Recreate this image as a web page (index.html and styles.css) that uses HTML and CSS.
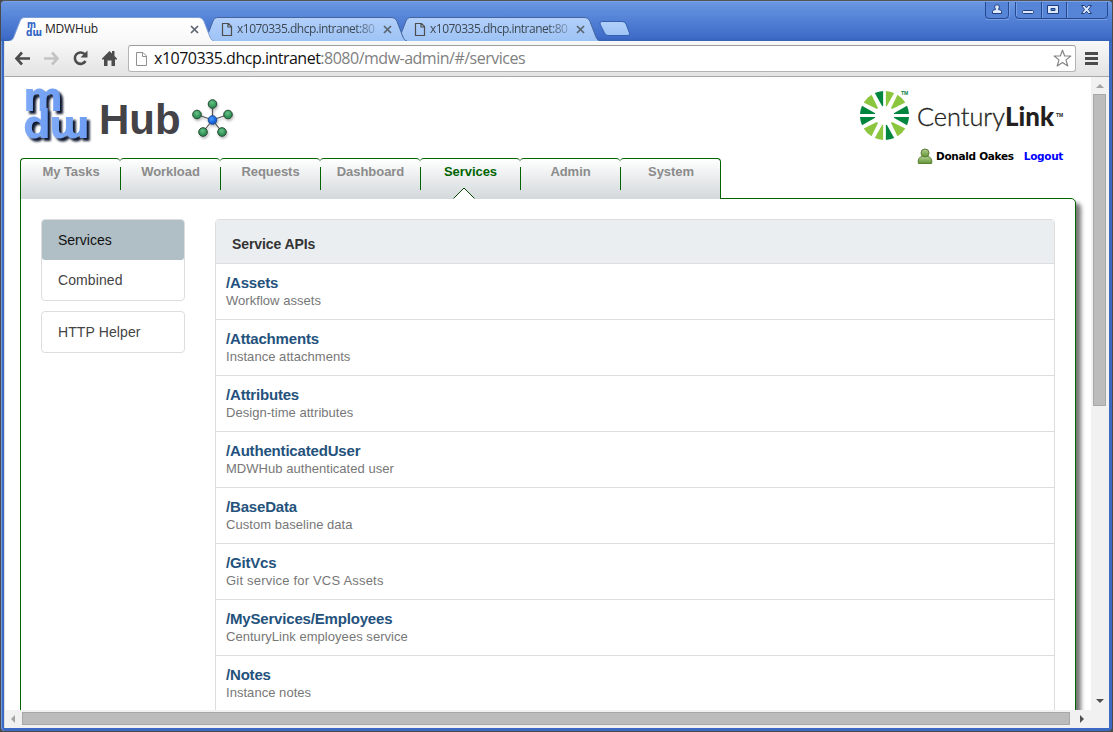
FILE: index.html
```html
<!DOCTYPE html>
<html lang="en">
<head>
<meta charset="utf-8">
<title>MDWHub</title>
<link rel="stylesheet" href="styles.css">
</head>
<body>
<svg width="0" height="0" class="defs">
  <defs>
    <linearGradient id="tabOn" x1="0" y1="0" x2="0" y2="1"><stop offset="0" stop-color="#fff"/><stop offset="1" stop-color="#f8f8f8"/></linearGradient>
    <linearGradient id="tabOff" x1="0" y1="0" x2="0" y2="1"><stop offset="0" stop-color="#b3d0fa"/><stop offset="1" stop-color="#9dc3f5"/></linearGradient>
    <linearGradient id="logoBlue" x1="0" y1="0" x2="1" y2="0"><stop offset="0" stop-color="#80aaf6"/><stop offset="1" stop-color="#6c9cf2"/></linearGradient>
    <radialGradient id="nodeGreen" cx=".45" cy=".35"><stop offset="0" stop-color="#66c389"/><stop offset="1" stop-color="#2f8f53"/></radialGradient>
    <radialGradient id="nodeBlue" cx=".4" cy=".35"><stop offset="0" stop-color="#4b9bff"/><stop offset="1" stop-color="#1560d8"/></radialGradient>
    <linearGradient id="userGreen" x1="0" y1="0" x2="0" y2="1"><stop offset="0" stop-color="#b5d096"/><stop offset="1" stop-color="#5f9430"/></linearGradient>
    <symbol id="tabShape" viewBox="0 0 207 24"><path d="M0 24C3 23.500 4 22 5 19.500L11 4C12 1.500 13.500.5 16 .5H189C192 .5 194 2 195 4.500L201 20C202 22.500 203 23.500 205 24"/></symbol>
    <symbol id="doc" viewBox="0 0 12 15"><path d="M1.500 1.500H7.500L10.500 4.500V13.500H1.500ZM7 1.500V5H10.500" fill="none" stroke="currentColor" stroke-width="1.200"/></symbol>
    <symbol id="cross" viewBox="0 0 9 9"><path d="M1 1L8 8M8 1L1 8" stroke="currentColor" stroke-width="1.700"/></symbol>
  </defs>
</svg>
<div class="window">
  <header class="titlebar">
    <div class="tabs">
      <div class="tab active">
        <svg class="shape" width="207" height="24"><use href="#tabShape"/></svg>
        <svg class="favicon" width="17" height="16" viewBox="0 0 17 16"><text x="1" y="7" font-size="11" textLength="9" lengthAdjust="spacingAndGlyphs">m</text><text x="0" y="14.500" font-size="11" textLength="16" lengthAdjust="spacingAndGlyphs">dɯ</text></svg>
        <span class="label">MDWHub</span>
        <svg class="close" width="9" height="9"><use href="#cross"/></svg>
      </div>
      <div class="tab second">
        <svg class="shape" width="207" height="24"><use href="#tabShape"/></svg>
        <svg class="doc" width="12" height="15"><use href="#doc"/></svg>
        <span class="label">x1070335.dhcp.intranet:80</span>
        <svg class="close" width="9" height="9"><use href="#cross"/></svg>
      </div>
      <div class="tab third">
        <svg class="shape" width="207" height="24"><use href="#tabShape"/></svg>
        <svg class="doc" width="12" height="15"><use href="#doc"/></svg>
        <span class="label">x1070335.dhcp.intranet:80</span>
        <svg class="close" width="9" height="9"><use href="#cross"/></svg>
      </div>
      <svg class="newtab" width="32" height="16" viewBox="0 0 32 16"><path d="M3 .5H23Q26 .5 27 3L30.500 12Q31 14.500 29 14.500H9Q6.500 14.500 5.500 12L1 3Q.5.5 3 .5Z" fill="url(#tabOff)" stroke="#3560b0"/></svg>
    </div>
    <svg class="controls" width="125" height="19" viewBox="0 0 125 19">
      <g fill="#5685d8" stroke="#25488e">
        <path d="M.5 0V13Q.5 16.500 4 16.500H20Q23.500 16.500 23.500 13V0"/>
        <path d="M30.500 0V13Q30.500 16.500 34 16.500H119Q122.500 16.500 122.500 13V0M56.500 0V16M81.500 0V16" />
      </g>
      <path d="M1 17.500H24M32 17.500H122M57.500 1V16M82.500 1V16M24.500 1V15M31.500 1V14" stroke="#86abec" stroke-opacity=".7" fill="none"/>
      <g transform="translate(0 -1)" fill="#dce8fb" stroke="#203e7c">
        <path d="M7.500 12.500V10.500Q7.500 8.500 10.500 8.500Q8.200 3.800 12 3.800Q15.800 3.800 13.500 8.500Q16.500 8.500 16.500 10.500V12.500Z"/>
        <rect x="37.500" y="9.500" width="11" height="3" rx="1"/>
        <path d="M62.500 4.500H73.500V12.500H62.500ZM66 7.500V9.500H70V7.500Z" fill-rule="evenodd"/>
        <path d="M96.500 4.500H99.500L101.500 6.700L103.500 4.500H106.500L103.500 8.500L106.500 12.500H103.500L101.500 10.300L99.500 12.500H96.500L99.500 8.500Z"/>
      </g>
    </svg>
  </header>

  <div class="toolbar">
    <svg class="tools" width="122" height="36" viewBox="0 0 122 36">
      <path d="M25 17.500H12M17 11.500L11.500 17.500L17 23.500" fill="none" stroke="#4c4c4c" stroke-width="2.600"/>
      <path d="M39 17.500H52M47 11.500L52.500 17.500L47 23.500" fill="none" stroke="#c3c3c3" stroke-width="2.600"/>
      <path d="M80.500 20A5.700 5.700 0 1 1 79.500 13" fill="none" stroke="#4c4c4c" stroke-width="2.600"/><path d="M82.500 9.500V16.500H75.500Z" fill="#4c4c4c"/>
      <path d="M97 17.500L104.500 10L107 12.500V10H109.500V15L112 17.500V18.500H110V25H106.500V19.500H102.500V25H99V18.500H97Z" fill="#4c4c4c"/>
    </svg>
    <div class="omnibox">
      <svg class="page" width="13" height="16" viewBox="0 0 13 16"><path d="M1.500 1.500H8L11.500 5V14.500H1.500ZM7.500 1.500V5.500H11.500" fill="#fdfdfd" stroke="#909090"/></svg>
      <span class="url"><b>x1070335.dhcp.intranet</b>:8080/mdw-admin/#/services</span>
      <svg class="star" width="19" height="19" viewBox="0 0 19 19"><path d="M9.500 1.200L11.700 7H17.800L13 10.900L14.800 17L9.500 13.500L4.200 17L6 10.900L1.200 7H7.300Z" fill="#fff" stroke="#858585" stroke-width="1.200" stroke-linejoin="round"/></svg>
    </div>
    <svg class="menu" width="13" height="13" viewBox="0 0 13 13"><path d="M0 1.500H13M0 6.500H13M0 11.500H13" stroke="#4b4b4b" stroke-width="3"/></svg>
  </div>

  <div class="viewport">
    <div class="page-area">
      <div class="masthead">
        <svg class="mdw" width="74" height="62" viewBox="0 0 74 62">
          <g class="glyphs">
            <text class="m" x="-1" y="24" textLength="40" lengthAdjust="spacingAndGlyphs">m</text>
            <text class="dw" x="-1" y="51" textLength="28" lengthAdjust="spacingAndGlyphs">d</text>
            <text class="dw" x="25" y="51" textLength="41" lengthAdjust="spacingAndGlyphs">ɯ</text>
          </g>
        </svg>
        <span class="hub">Hub</span>
        <svg class="network" width="44" height="42" viewBox="0 0 44 42">
          <path d="M21.500 22L21.500 6M21.500 22L6 16.500M21.500 22L37 16.500M21.500 22L12 34M21.500 22L31 34" stroke="#555" stroke-width="1.200"/>
          <g fill="url(#nodeGreen)" stroke="#20482e"><circle cx="21.500" cy="6" r="4.300"/><circle cx="6" cy="16.500" r="4.300"/><circle cx="37" cy="16.500" r="4.300"/><circle cx="12" cy="34" r="4.300"/><circle cx="31" cy="34" r="4.300"/></g>
          <circle cx="21.500" cy="22" r="4.300" fill="url(#nodeBlue)" stroke="#1b478f"/>
        </svg>
        <div class="account">
          <svg class="century" width="208" height="54" viewBox="0 0 208 54">
            <defs>
              <path id="rayA" d="M1.400 -9.500L1.400 -24.500A24.500 24.500 0 0 1 9.700 -22.500L2.300 -9.300Z"/>
              <path id="rayB" d="M-1.400 -9.500L-1.400 -24.500A24.500 24.500 0 0 0 -9.700 -22.500L-2.300 -9.300Z"/>
              <path id="rayC" d="M6.500 -7.600L13 -20.800A24.500 24.500 0 0 1 20.800 -13L7.600 -6.500Z"/>
            </defs>
            <g transform="translate(24.500 26.500)" fill="#8cc63f">
              <g><use href="#rayA"/><use href="#rayC"/><use href="#rayB" fill="#00853f"/></g>
              <g transform="rotate(90)"><use href="#rayA" fill="#00853f"/><use href="#rayB" fill="#00853f"/><use href="#rayC"/></g>
              <g transform="rotate(180)"><use href="#rayB" fill="#00853f"/><use href="#rayA"/><use href="#rayC"/></g>
              <g transform="rotate(270)"><use href="#rayA" fill="#00853f"/><use href="#rayB" fill="#00853f"/><use href="#rayC"/></g>
            </g>
            <text class="tm green" x="41" y="6">TM</text>
            <text class="thin" x="57" y="37" textLength="88" lengthAdjust="spacingAndGlyphs">Century</text>
            <text class="heavy" x="145" y="37" textLength="49" lengthAdjust="spacingAndGlyphs">Link</text>
            <text class="tm" x="196" y="28">TM</text>
          </svg>
          <div class="user">
            <svg width="16" height="17" viewBox="0 0 16 17"><g fill="url(#userGreen)" stroke="#5c7f35"><path d="M1.500 15.500Q.5 13 2 10.500Q3 8.500 5.500 8.500H10.500Q13 8.500 14 10.500Q15.500 13 14.500 15.500Z"/><circle cx="8" cy="5" r="4"/></g></svg>
            <span>Donald Oakes</span><a>Logout</a>
          </div>
        </div>
      </div>

      <nav class="nav">
        <a>My Tasks</a><a>Workload</a><a>Requests</a><a>Dashboard</a>
        <a class="current">Services<svg class="notch" width="22" height="12" viewBox="0 0 22 12"><path d="M0 12L.5 11.500L11 1L21.500 11.500L22 12Z" fill="#fff"/><path d="M.5 11.500L11 1L21.500 11.500" fill="none" stroke="#064c06"/></svg></a>
        <a>Admin</a><a>System</a>
      </nav>

      <main class="panel">
        <aside class="side">
          <div class="card"><a class="on">Services</a><a>Combined</a></div>
          <div class="card"><a>HTTP Helper</a></div>
        </aside>
        <section class="list">
          <h2>Service APIs</h2>
          <div class="row"><b>/Assets</b><span>Workflow assets</span></div>
          <div class="row"><b>/Attachments</b><span>Instance attachments</span></div>
          <div class="row"><b>/Attributes</b><span>Design-time attributes</span></div>
          <div class="row"><b>/AuthenticatedUser</b><span>MDWHub authenticated user</span></div>
          <div class="row"><b>/BaseData</b><span>Custom baseline data</span></div>
          <div class="row"><b>/GitVcs</b><span class="wide">Git service for VCS Assets</span></div>
          <div class="row"><b>/MyServices/Employees</b><span>CenturyLink employees service</span></div>
          <div class="row"><b>/Notes</b><span>Instance notes</span></div>
        </section>
      </main>
    </div>
    <div class="vscroll"><i class="up"></i><div class="thumb"></div><i class="down"></i></div>
  </div>
  <div class="hscroll"><i class="left"></i><div class="thumb"></div><i class="right"></i></div>
</div>
</body>
</html>
```
FILE: styles.css
```css
* { box-sizing: border-box; }
body { margin: 0; width: 1113px; height: 732px; overflow: hidden; background: #4a4a4a; font-family: "Liberation Sans", Arial, sans-serif; }
svg { display: block; flex: none; }
.defs { position: absolute; }

.window { height: 731px; margin: 0 1px; border-top: 1px solid #555; padding: 0 3px 3px; display: flex; flex-direction: column; background: #3c6ac2; border-radius: 4px; box-shadow: inset 1px 0 #7299dc; }

.titlebar { height: 40px; margin: 0 -3px; padding: 0 2px 0 8px; display: flex; justify-content: space-between; align-items: flex-end; background: linear-gradient(#6b97e2, #5a88da 30%, #3f6cc8 90%, #3563b8); border-radius: 4px 4px 0 0; border-top: 1px solid #7ba2e6; }
.tabs { display: flex; align-items: flex-end; margin-left: 0; font: 12px/16px "Open Sans", "Noto Sans", sans-serif; }
.tab { position: relative; width: 207px; height: 24px; margin-right: -14px; padding: 0 17px 0 19px; display: flex; align-items: center; color: #3d4854; }
.tab.active { z-index: 3; padding-left: 17px; color: #222; }
.tab.second { z-index: 2; }
.tab.third { z-index: 1; }
.shape { position: absolute; inset: 0; fill: url(#tabOff); stroke: #44669f; stroke-width: 1; }
.active .shape { fill: url(#tabOn); stroke: #7d9fd8; }
.tab > :not(.shape) { position: relative; }
.favicon text { font-family: "DejaVu Sans", sans-serif; font-weight: bold; fill: #3265c5; }
.doc { color: #4d4d4d; }
.label { width: 141px; margin-left: 4px; overflow: hidden; white-space: nowrap; letter-spacing: -.5px; }
.active .label { margin-left: 2px; width: 147px; letter-spacing: -.2px; }
.tab:not(.active) .label { -webkit-mask-image: linear-gradient(90deg, #000 118px, transparent 146px); mask-image: linear-gradient(90deg, #000 118px, transparent 146px); }
.close { margin-left: 7px; color: #5b6470; }
.active .close { margin-left: 0; }
.newtab { margin: 0 0 4px 11px; }
.controls { align-self: flex-start; }

.toolbar { height: 36px; background: linear-gradient(#f8f8f8, #e3e3e3); border-bottom: 1px solid #a8a8a8; display: flex; align-items: flex-start; border-left: 1px solid #e0e0e0; }
.tools { margin-right: 1px; }
.omnibox { width: 948px; height: 27px; margin-top: 4px; padding: 0 3px 0 6px; display: flex; align-items: center; background: #fff; border: 1px solid #b4b4b4; border-top-color: #9d9d9d; border-radius: 3px; }
.url { flex: 1; margin: -1px 0 0 6px; font: 16px/24px "Open Sans", "Noto Sans", sans-serif; color: #808080; letter-spacing: -.5px; white-space: nowrap; }
.url b { font-weight: 400; color: #111; }
.menu { margin: 11px 0 0 9px; }

.viewport { height: 633px; display: flex; border-left: 1px solid #ddd; }
.page-area { width: 1086px; height: 633px; overflow: hidden; background: #fff; padding: 0 15px; }
.masthead { height: 81px; display: flex; align-items: flex-start; }
.mdw { margin: 10px 0 0 4px; }
.glyphs { font-family: "DejaVu Sans", sans-serif; font-weight: bold; fill: url(#logoBlue); filter: drop-shadow(3px 3px 1.2px #101830); }
.glyphs .m { font-size: 40px; }
.glyphs .dw { font-size: 39px; }
.hub { margin: 19px 0 0 1px; font: bold 42px/48px "Liberation Sans", Arial, sans-serif; color: #434348; }
.network { margin: 21px 0 0 10px; filter: drop-shadow(1px 2px 1px rgba(0,0,0,.25)); }
.account { width: 208px; margin: 12px 8px 0 auto; }
.thin { font: 300 26px Lato, sans-serif; fill: #231f20; stroke: #231f20; stroke-width: .35px; }
.heavy { font: 900 26px Lato, sans-serif; fill: #231f20; }
.tm { font: bold 5px "Liberation Sans", sans-serif; fill: #231f20; }
.tm.green { fill: #00853f; }
.user { margin: 5px 0 0 57px; display: flex; align-items: center; font: bold 10.5px/17px "DejaVu Sans", Verdana, sans-serif; color: #000; white-space: nowrap; }
.user span { margin-left: 3px; letter-spacing: -.3px; }
.user a { margin-left: 10px; color: #00f; letter-spacing: -.3px; }

.nav { width: 701px; height: 41px; display: flex; position: relative; }
.nav a { position: relative; width: 100px; height: 41px; flex: none; padding: 5px 0 0 1px; text-align: center; font: bold 13px/16px "Liberation Sans", Arial, sans-serif; color: #8b8b8b; letter-spacing: -.05px; background: linear-gradient(#fff, #d3d8da); border-top: 1px solid #006400; border-radius: 4px 4px 0 0; }
.nav a:not(:first-child)::before { content: ""; position: absolute; left: 0; top: 8px; width: 1px; height: 23px; background: #006400; }
.nav a:first-child { border-left: 1px solid #006400; }
.nav a:last-child { width: 101px; padding-left: 2px; border-right: 1px solid #006400; }
.nav a.current { color: #006400; z-index: 2; }
.notch { position: absolute; left: 33px; top: 28px; }

.panel { width: 1056px; height: 560px; margin-top: -1px; padding: 20px; display: flex; gap: 30px; border: 1px solid #006400; border-radius: 0 5px 0 0; box-shadow: 5px 5px 4px 0 #777; background: #fff; }
.side { width: 144px; }
.card { margin-bottom: 10px; border: 1px solid #ddd; border-radius: 4px; }
.card a { display: block; height: 40px; padding-left: 16px; font-size: 14px; line-height: 40px; color: #444; letter-spacing: .1px; }
.card a.on { background: #b0bec5; color: #111; border-radius: 3px; letter-spacing: 0; }
.list { width: 840px; height: 600px; border: 1px solid #ddd; border-radius: 4px; }
.list h2 { margin: 0; height: 44px; padding: 4px 0 0 16px; font-size: 14px; line-height: 40px; color: #333; letter-spacing: -.1px; background: #eaeef1; border-bottom: 1px solid #ddd; }
.row { height: 56px; padding: 10px 10px 0; border-bottom: 1px solid #ddd; white-space: nowrap; }
.row:last-child { border-bottom: 0; }
.row b, .row span { display: block; line-height: 18px; }
.row b { font-size: 15px; color: #24527c; letter-spacing: -.18px; }
.row span { font-size: 13px; color: #777; line-height: 17px; letter-spacing: .04px; }
.row span.wide { letter-spacing: .2px; }

.vscroll { width: 18px; background: #f1f1f1; display: flex; flex-direction: column; align-items: center; padding-right: 1px; }
.thumb { background: #bcbcbc; border: 1px solid #a8a8a8; }
.vscroll .thumb { width: 13px; height: 312px; margin-top: 6px; }
.vscroll .up { margin-top: 7px; border: 4px solid transparent; border-top: 0; border-bottom-color: #a3a3a3; }
.vscroll .down { margin: auto 0 7px; border: 4px solid transparent; border-bottom: 0; border-top-color: #505050; }
.hscroll { height: 18px; background: #f1f1f1; display: flex; align-items: center; padding-bottom: 1px; border-left: 1px solid #ddd; }
.hscroll .thumb { width: 1048px; height: 13px; margin-left: 7px; }
.hscroll .left { margin-left: 6px; border: 4px solid transparent; border-left: 0; border-right-color: #a3a3a3; }
.hscroll .right { margin-left: 10px; border: 4px solid transparent; border-right: 0; border-left-color: #505050; }
```
